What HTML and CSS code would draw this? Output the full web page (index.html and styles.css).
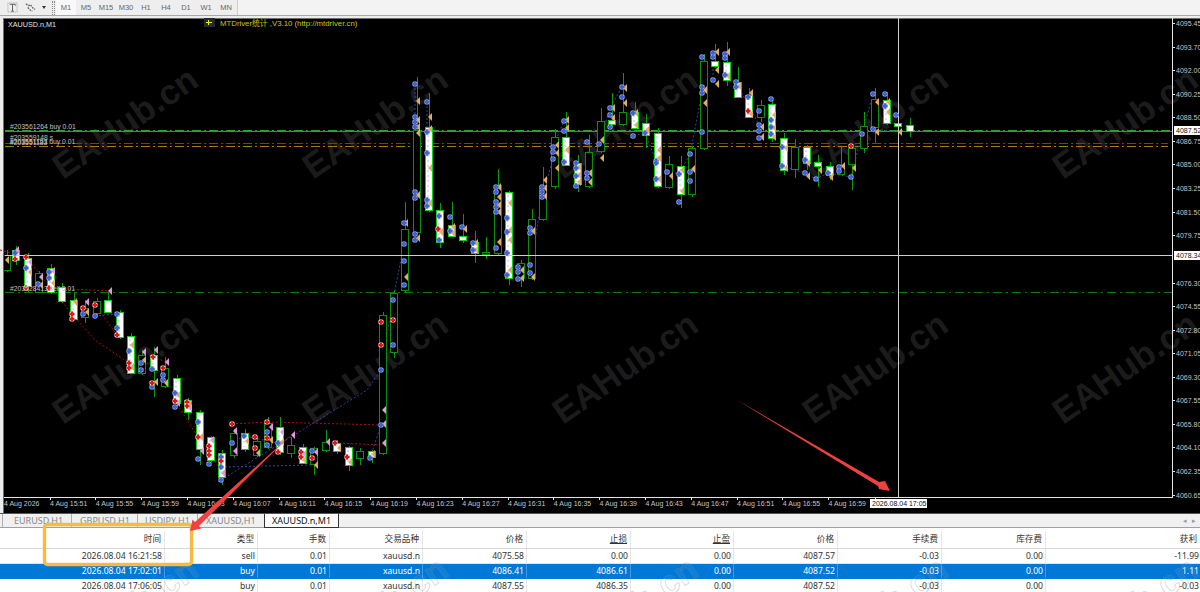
FILE: index.html
```html
<!DOCTYPE html>
<html lang="zh-CN">
<head>
    <meta charset="UTF-8">
    <meta name="viewport" content="width=device-width, initial-scale=1.0">
    <title>XAUUSD.n,M1</title>
    <link rel="stylesheet" href="styles.css">
</head>
<body>
    <div class="page">
        <div class="toolbar">
            <div class="toolbar-group">
                <svg class="tool-icon" viewBox="0 0 12 12">
                    <path d="M1 1v10h10V1z" fill="none" stroke="#999" stroke-dasharray="1 1"/>
                    <path d="M3 2.5h6v1.5M6 2.5V10M4.5 10h3" fill="none" stroke="#555"/>
                </svg>
                <svg class="tool-icon tool-lines" viewBox="0 0 12 12">
                    <path d="M1 2l3 2 2-1 3 4 2 1M3 6l3 3 2 1" fill="none" stroke="#666" stroke-width="1.5" stroke-dasharray="2 1"/>
                </svg>
                <span class="caret"></span>
                <span class="grip"></span>
                <span class="period active">M1</span>
                <span class="period">M5</span>
                <span class="period">M15</span>
                <span class="period">M30</span>
                <span class="period">H1</span>
                <span class="period">H4</span>
                <span class="period">D1</span>
                <span class="period">W1</span>
                <span class="period">MN</span>
            </div>
        </div>

        <div class="chart-frame">
            <svg id="chart" class="chart" viewBox="0 16 1200 497" xmlns="http://www.w3.org/2000/svg"></svg>
        </div>

        <div class="tabs">
            <span class="tab">EURUSD,H1</span>
            <span class="tab">GBPUSD,H1</span>
            <span class="tab">USDJPY,H1</span>
            <span class="tab last">XAUUSD,H1</span>
            <span class="tab active">XAUUSD.n,M1</span>
            <span class="tab-arrows">&#9666;&nbsp;&nbsp;&nbsp;&#9656;</span>
        </div>

        <div class="trades">
            <div class="row head">
                <span>时间</span><span>类型</span><span>手数</span><span>交易品种</span><span>价格</span>
                <span class="ul">止损</span><span class="ul">止盈</span><span>价格</span><span>手续费</span><span>库存费</span><span>获利</span>
            </div>
            <div class="row">
                <span>2026.08.04 16:21:58</span><span>sell</span><span>0.01</span><span>xauusd.n</span><span>4075.58</span>
                <span>0.00</span><span>0.00</span><span>4087.57</span><span>-0.03</span><span>0.00</span><span>-11.99</span>
            </div>
            <div class="row selected">
                <span>2026.08.04 17:02:01</span><span>buy</span><span>0.01</span><span>xauusd.n</span><span>4086.41</span>
                <span>4086.61</span><span>0.00</span><span>4087.52</span><span>-0.03</span><span>0.00</span><span>1.11</span>
            </div>
            <div class="row">
                <span>2026.08.04 17:06:05</span><span>buy</span><span>0.01</span><span>xauusd.n</span><span>4087.55</span>
                <span>4086.35</span><span>0.00</span><span>4087.52</span><span>-0.03</span><span>0.00</span><span>-0.03</span>
            </div>
        </div>

        <!-- annotations drawn on top of the screenshot -->
        <svg class="marks" viewBox="0 0 1200 592" xmlns="http://www.w3.org/2000/svg">
            <g class="wm-outline">
                <text transform="translate(63 670) rotate(-34.7)">EAHub.cn</text>
                <text transform="translate(313 670) rotate(-34.7)">EAHub.cn</text>
                <text transform="translate(563 670) rotate(-34.7)">EAHub.cn</text>
                <text transform="translate(813 670) rotate(-34.7)">EAHub.cn</text>
                <text transform="translate(1063 670) rotate(-34.7)">EAHub.cn</text>
            </g>
            <rect class="note-box" x="44.5" y="524.5" width="147" height="40" rx="3"/>
            <path class="note-arrow" d="M293 433 L199 526 L201.5 528.6 L190 531 L192.5 519.4 L195 522 Z"/>
            <path class="note-arrow" d="M737 400 L879 482 L885 481 L890 491 L879 489 L878 486 Z"/>
        </svg>
    </div>
    <script src="chart.js"></script>
</body>
</html>
```

FILE: styles.css
```css
* {
    box-sizing: border-box;
}
body {
    margin: 0;
    background: #f0f0f0;
    font-family: "Noto Sans", "Noto Sans CJK SC", sans-serif;
    overflow: hidden;
}
.page {
    position: relative;
    width: 1200px;
    height: 592px;
    overflow: hidden;
}

/* top toolbar */
.toolbar {
    height: 16px;
    background: #f3f3f3;
    border-bottom: 1px solid #a8a8a8;
}
.toolbar-group {
    display: flex;
    align-items: center;
    width: 238px;
    height: 15px;
    background: #eeeeee;
    border-right: 1px solid #cfcfcf;
    padding-left: 7px;
}
.tool-icon {
    flex: none;
    width: 11px;
    height: 11px;
}
.tool-lines {
    margin-left: 7px;
}
.caret {
    flex: none;
    width: 0;
    height: 0;
    margin-left: 6px;
    border-left: 2.5px solid transparent;
    border-right: 2.5px solid transparent;
    border-top: 3px solid #333;
}
.grip {
    flex: none;
    width: 3px;
    height: 14px;
    margin-left: 6px;
    margin-right: 1px;
    border-left: 1px dotted #888;
    border-right: 1px dotted #888;
}
.period {
    flex: none;
    width: 20px;
    height: 15px;
    line-height: 15px;
    text-align: center;
    font-family: "Liberation Sans", sans-serif;
    font-size: 7.5px;
    color: #666;
}
.period.active {
    background: #f9f9f9;
}

/* chart */
.chart-frame {
    height: 497px;
    background: #f4f4f4;
}
.chart {
    display: block;
    width: 1200px;
    height: 497px;
    background: #000;
    font-family: "Liberation Sans", sans-serif;
}
.chart-edge {
    fill: #ececec;
}
.chart-edge-line {
    fill: none;
    stroke: #6e6e6e;
    shape-rendering: crispEdges;
}
.watermark {
    font-family: "Liberation Sans", sans-serif;
    font-size: 35px;
    font-weight: bold;
    fill: #1b1b1b;
}
.axis-line {
    stroke: #e4e4e4;
    fill: none;
    shape-rendering: crispEdges;
}
.axis-text {
    font-size: 7px;
    fill: #c4c4c4;
}
.box-text {
    font-size: 7px;
    fill: #111;
}
.box-bg {
    fill: #fff;
}
.order-text {
    font-size: 6.8px;
    fill: #c0c0c0;
}
.title-text {
    font-size: 7.2px;
    fill: #e4e4e4;
}
.mt-text {
    font-family: "Liberation Sans", "Noto Sans CJK SC", sans-serif;
    font-size: 7.8px;
    fill: #c8c800;
}
.plus-box {
    fill: #232a32;
}
.plus {
    stroke: #f0f000;
    shape-rendering: crispEdges;
}
.level {
    fill: none;
    shape-rendering: crispEdges;
}
.level-bid {
    stroke: #6e6e6e;
}
.level-green {
    stroke: #28a428;
    stroke-dasharray: 9 3 2 3;
}
.level-dark {
    stroke: #0d7a0d;
    stroke-dasharray: 9 4 2 4;
}
.level-red {
    stroke: #d01414;
    stroke-dasharray: 9 3 2 3;
}
.level-gold {
    stroke: #a87c0a;
    stroke-dasharray: 9 3 2 3;
}
.cross {
    stroke: #cfcfcf;
    shape-rendering: crispEdges;
}
.wick {
    stroke: #0a9a0a;
    shape-rendering: crispEdges;
}
.body-up {
    fill: #000;
    stroke: #0b8f0b;
    shape-rendering: crispEdges;
}
.body-down {
    fill: #fff;
    stroke: #10d010;
    shape-rendering: crispEdges;
}
.body-dots {
    stroke: #b4c2ee;
    stroke-dasharray: 2 3;
}
.link-blue {
    stroke: #2f46a8;
    stroke-dasharray: 2 2;
    fill: none;
}
.link-red {
    stroke: #a80f0f;
    stroke-dasharray: 2 2;
    fill: none;
}
.halo {
    fill: #8f9cc4;
}
.dot-blue {
    stroke: #3d63d8;
    stroke-width: 2;
}
.dot-red {
    stroke: #f01010;
    stroke-width: 2;
}
.halo-red {
    fill: #d8c6c6;
}
.tri-orange {
    fill: #dfae62;
}
.tri-pink {
    fill: #e596de;
}

/* symbol tabs */
.tabs {
    display: flex;
    align-items: flex-end;
    height: 15px;
    background: #f0f0f0;
    border-top: 1px solid #555;
    border-bottom: 1px solid #a0a0a0;
    padding-left: 2px;
    position: relative;
    font-size: 9px;
}
.tab {
    flex: none;
    width: 66px;
    height: 13px;
    line-height: 13px;
    padding-left: 8px;
    color: #888;
    border-right: 1px solid #b0b0b0;
    white-space: nowrap;
}
.tab:first-child {
    border-left: 1px solid #b0b0b0;
    width: 70px;
    padding-left: 11px;
}
.tab:nth-child(3) {
    width: 60px;
    padding-left: 7px;
}
.tab.last {
    border-right: 0;
}
.tab.active {
    width: 75px;
    height: 14px;
    padding-left: 7px;
    margin-bottom: -1px;
    color: #111;
    background: #fff;
    border: 1px solid #333;
    border-top: 0;
}
.tab-arrows {
    margin-left: auto;
    margin-right: 4px;
    height: 13px;
    line-height: 13px;
    font-size: 7px;
    color: #999;
}

/* trade list */
.trades {
    background: #fff;
    padding-top: 3px;
    font-size: 8.6px;
    color: #333;
}
.row {
    display: grid;
    grid-template-columns: 165px 93px 72px 93px 104px 104px 103px 104px 104px 104px 154px;
    height: 15px;
    line-height: 14px;
    border-bottom: 1px solid #e2e2e2;
}
.row span {
    padding-right: 2px;
    text-align: right;
    border-right: 1px solid #e6e6e6;
    white-space: nowrap;
}
.row span:last-child {
    padding-right: 1px;
    border-right: 0;
}
.row.head {
    height: 18px;
    line-height: 16px;
    border-bottom: 1px solid #d8d8d8;
}
.row.head span {
    padding-right: 3px;
}
.row.selected {
    background: #0078d7;
    color: #fff;
    border-bottom-color: #0078d7;
}
.row.selected span {
    border-right-color: #3f9ae2;
}
.ul {
    text-decoration: underline;
}

/* overlay with the orange box and red arrows */
.marks {
    position: absolute;
    left: 0;
    top: 0;
    width: 1200px;
    height: 592px;
    pointer-events: none;
}
.wm-outline {
    font-family: "Liberation Sans", sans-serif;
    font-size: 35px;
    font-weight: bold;
    fill: rgba(255, 255, 255, 0.08);
    stroke: rgba(130, 130, 130, 0.4);
    stroke-width: 0.7;
}
.note-box {
    fill: none;
    stroke: #fab93f;
    stroke-width: 3.4;
}
.note-arrow {
    fill: #f04040;
}
```

FILE: chart.js
```js
// candles: [x, body top, body bottom, wick top, wick bottom, white body?]
const candles = [
    [7,255,270,250,272,0],[16,250,260,246,265,1],[28,258,286,253,292,1],[39,273,292,271,293,0],
    [51,268,292,264,294,1],[62,287,301,283,303,1],[74,300,319,292,320,1],[85,308,317,300,323,0],
    [97,301,313,298,317,0],[108,300,312,293,313,1],[120,312,337,310,339,1],[131,336,373,333,374,1],
    [142,355,373,350,375,0],[154,355,370,347,397,1],[165,368,386,357,388,0],[177,378,403,375,407,1],
    [188,400,412,398,420,1],[200,412,449,410,465,1],[211,437,460,436,462,1],[222,453,477,450,485,1],
    [234,433,455,429,458,0],[245,433,449,429,452,1],[257,441,455,437,457,0],[268,423,447,417,449,0],
    [280,427,452,417,455,1],[291,445,453,437,458,0],[303,447,463,444,464,1],[314,448,464,447,475,0],
    [326,442,450,430,452,0],[337,443,451,440,454,1],[349,447,465,446,471,1],[360,451,458,448,465,0],
    [372,451,457,450,463,1],[383,315,453,312,455,0],[394,293,352,290,358,0],[405,229,290,202,292,0],
    [417,130,232,77,234,0],[429,127,210,93,212,1],[440,210,242,203,248,1],[452,225,236,202,237,1],
    [463,236,240,214,243,1],[475,242,253,231,263,1],[486,252,254,237,259,0],[498,185,253,169,255,0],
    [509,192,278,191,285,1],[521,263,278,260,287,0],[532,219,278,209,280,0],[543,187,219,167,221,0],
    [555,137,186,129,189,0],[566,137,165,112,166,1],[578,163,184,155,192,1],[589,152,186,135,188,0],
    [601,121,151,108,153,0],[612,120,124,93,127,1],[623,112,124,73,126,0],[635,112,128,102,129,1],
    [646,123,135,114,148,1],[658,133,186,128,188,1],[669,164,187,156,189,0],[681,166,194,156,208,1],
    [692,148,194,146,197,0],[704,61,148,54,150,0],[715,61,66,44,68,1],[727,62,80,42,86,1],
    [738,82,97,67,98,1],[749,95,117,88,118,1],[761,105,117,100,122,0],[772,104,138,97,142,1],
    [784,138,170,133,175,1],[795,147,169,139,178,0],[807,147,163,145,170,1],[818,162,166,155,187,1],
    [830,166,175,162,180,1],[841,165,174,147,175,0],[852,148,164,146,190,0],[864,126,148,112,153,0],
    [875,99,127,88,143,0],[887,100,123,92,125,1],[898,123,126,122,135,1],[910,125,131,118,137,1]
];

const blue = [[15,253],[26,268],[38,284],[49,272],[49,278],[83,314],[95,316],[117,314],[117,328],[129,351],
    [141,363],[141,370],[152,369],[152,387],[163,375],[163,380],[175,393],[175,407],[198,422],[198,459],
    [209,464],[221,457],[221,467],[221,480],[232,443],[244,436],[267,432],[267,445],[278,443],[312,451],
    [370,458],[381,425],[381,370],[393,300],[393,345],[404,223],[404,244],[404,261],[404,285],
    [415,84],[427,102],[415,117],[415,122],[415,127],[427,132],[427,153],[427,200],[427,206],[415,192],[415,198],
    [415,234],[415,240],[439,216],[439,240],[450,217],[450,231],[462,227],[473,243],[473,250],[496,187],[496,192],
    [496,202],[496,207],[496,212],[496,248],[507,218],[507,232],[507,253],[507,275],[518,267],[518,272],[518,279],
    [530,228],[530,233],[530,265],[530,273],[542,187],[542,192],[542,197],[553,147],[553,152],[553,159],[564,121],
    [564,131],[564,162],[576,163],[576,168],[576,176],[576,186],[587,142],[587,173],[587,178],[599,144],[610,108],
    [610,115],[610,127],[622,87],[622,97],[633,113],[633,136],[645,133],[656,161],[656,163],[656,179],[667,172],
    [679,174],[679,202],[690,154],[690,172],[690,181],[702,57],[702,87],[702,93],[702,132],[713,53],[713,57],[713,80],
    [725,54],[725,58],[725,75],[736,82],[736,87],[748,97],[759,111],[759,125],[759,131],[759,138],[771,99],[771,120],
    [771,127],[771,134],[782,147],[782,166],[805,160],[805,173],[816,179],[828,173],[839,167],[839,171],[851,177],
    [862,134],[873,94],[873,129],[885,94],[885,106],[896,115]];

const red = [[15,259],[26,257],[26,288],[49,288],[72,314],[72,319],[83,308],[95,305],[117,335],[129,363],[129,368],
    [153,357],[152,383],[163,368],[175,401],[187,402],[187,406],[198,437],[209,446],[209,451],[209,455],[221,461],
    [232,424],[255,437],[255,448],[267,422],[267,438],[278,452],[301,452],[301,457],[312,458],[335,443],[347,457],
    [381,322],[381,345],[393,320],[438,229],[748,111],[851,146]];

const orange = [[7,260],[30,272],[41,285],[53,283],[75,302],[87,312],[132,345],[132,367],[144,360],[156,382],[166,383],
    [178,395],[189,405],[201,437],[247,441],[258,453],[271,440],[282,442],[304,460],[316,465],[339,448],[350,462],[373,454],
    [406,223],[406,277],[418,101],[418,120],[418,127],[418,133],[418,195],[418,238],[430,117],[430,129],[430,168],[430,203],
    [441,232],[453,227],[453,233],[465,229],[476,243],[476,250],[499,187],[499,197],[499,205],[499,212],[499,242],[510,203],
    [510,230],[510,240],[510,270],[522,270],[522,278],[533,231],[533,277],[545,180],[545,188],[545,196],[557,145],[557,153],
    [557,168],[567,120],[567,128],[567,150],[579,167],[579,175],[579,182],[590,173],[590,182],[602,140],[602,158],[613,108],
    [613,118],[625,88],[625,103],[636,113],[636,125],[647,130],[659,150],[659,158],[659,179],[671,176],[682,170],[682,191],
    [693,169],[705,90],[705,103],[717,52],[717,70],[717,84],[728,52],[728,76],[739,86],[751,93],[751,114],[762,127],[762,137],
    [774,115],[774,128],[774,137],[786,148],[786,168],[808,163],[808,176],[820,170],[831,177],[843,166],[854,168],[877,102],
    [877,132],[888,102],[888,112],[900,132]];

const pink = [[17,250],[30,262],[41,277],[53,271],[87,302],[110,291],[144,352],[156,350],[167,362],[178,403],[190,408],
    [202,451],[212,440],[223,473],[235,431],[235,451],[271,427],[282,432],[293,435],[304,454],[316,452],[328,442],
    [384,410],[384,424],[384,443]];

const blueLinks = ['221,480 367,390 381,370 393,300 404,244','221,467 312,465','232,443 244,436 278,443','95,316 117,314',
    '381,425 370,458','415,84 415,240','427,102 427,206','496,187 496,248','507,218 507,275','530,228 530,273 542,197 553,159',
    '553,147 564,121','576,163 576,186 587,178 599,144 610,108 622,87','633,113 633,136 645,133 656,161 656,179',
    '667,172 679,174 690,154 702,93 702,57','713,53 713,80','725,54 725,75','736,82 759,125','771,99 771,134',
    '782,166 805,173 816,179 828,173 851,177 862,134 873,94','873,129 896,132'];

const redLinks = ['0,250 26,257 72,314 95,340 129,363','49,288 110,291','26,288 49,288','95,305 117,335','153,357 167,362',
    '175,401 198,437 223,473','232,424 267,422 384,425','335,443 384,445','198,437 209,451'];

const axisPrices = [[23,'4095.45'],[47,'4093.70'],[70,'4092.00'],[94,'4090.25'],[117,'4088.50'],[141,'4086.75'],[164,'4085.00'],
    [188,'4083.25'],[212,'4081.50'],[235,'4079.75'],[283,'4076.30'],[306,'4074.55'],[330,'4072.80'],[353,'4071.05'],
    [377,'4069.30'],[400,'4067.55'],[424,'4065.80'],[447,'4064.10'],[471,'4062.35'],[495,'4060.65']];

const axisTimes = ['15:51','15:55','15:59','16:03','16:07','16:11','16:15','16:19','16:23','16:27','16:31','16:35','16:39',
    '16:43','16:47','16:51','16:55','16:59'];

let svg = '';

svg += '<rect class="chart-edge" x="0" y="16" width="3" height="497"/>';
svg += '<rect class="chart-edge" x="0" y="16" width="1200" height="2"/>';
svg += '<path class="chart-edge-line" d="M3.5 513V18.5H1200"/>';

// watermark
for (let row = 0; row < 2; row++) {
    for (let col = 0; col < 5; col++) {
        const tx = 63 + col * 250;
        const ty = 180 + row * 245;
        svg += `<text class="watermark" transform="translate(${tx} ${ty}) rotate(-34.7)">EAHub.cn</text>`;
    }
}

// order levels
svg += '<line class="level level-bid" x1="5" x2="1172" y1="131.5" y2="131.5"/>';
svg += '<line class="level level-green" x1="5" x2="1172" y1="130.5" y2="130.5"/>';
svg += '<line class="level level-red" x1="5" x2="1168" y1="143.5" y2="143.5"/>';
svg += '<line class="level level-gold" x1="5" x2="1168" y1="146.5" y2="146.5"/>';
svg += '<line class="level level-dark" x1="5" x2="1172" y1="292.5" y2="292.5"/>';

for (const line of redLinks) svg += `<polyline class="link-red" points="${line}"/>`;
for (const line of blueLinks) svg += `<polyline class="link-blue" points="${line}"/>`;

// candles
for (const [x, top, bottom, high, low, white] of candles) {
    svg += `<line class="wick" x1="${x + 0.5}" x2="${x + 0.5}" y1="${high}" y2="${low}"/>`;
    svg += `<rect class="${white ? 'body-down' : 'body-up'}" x="${x - 3.5}" y="${top + 0.5}" width="7" height="${bottom - top}"/>`;
    if (white && bottom - top > 14) {
        svg += `<line class="body-dots" x1="${x - 1}" x2="${x - 1}" y1="${top + 3}" y2="${bottom - 2}"/>`;
    }
}

// crosshair goes over the candles
svg += '<line class="cross" x1="898.5" x2="898.5" y1="18" y2="497"/>';
svg += '<line class="cross" x1="5" x2="1172" y1="255.5" y2="255.5"/>';

// trade markers
const dot = (x, y, halo, cls) => `<circle class="${halo}" cx="${x}" cy="${y}" r="2.8"/>` +
    `<path class="${cls}" d="M${x - 2.4} ${y}h4.8M${x} ${y - 2.4}v4.8"/>`;
const tri = (x, y, cls) => `<path class="${cls}" d="M${x - 2} ${y}L${x + 2} ${y - 4}V${y + 4}Z"/>`;

for (const [x, y] of orange) svg += tri(x, y, 'tri-orange');
for (const [x, y] of pink) svg += tri(x, y, 'tri-pink');
for (const [x, y] of blue) svg += dot(x, y, 'halo', 'dot-blue');
for (const [x, y] of red) svg += dot(x, y, 'halo-red', 'dot-red');

// labels
svg += '<text class="title-text" x="8" y="27">XAUUSD.n,M1</text>';
svg += '<rect class="plus-box" x="204" y="18" width="11" height="9"/>';
svg += '<path class="plus" d="M206 22.5h6M208.5 20v5" fill="none"/>';
svg += '<text class="mt-text" x="220" y="26">MTDriver统计 ,V3.10 (http://mtdriver.cn)</text>';
svg += '<text class="order-text" x="10" y="129">#203561264 buy 0.01</text>';
svg += '<text class="order-text" x="10" y="140">#203559148 s</text>';
svg += '<text class="order-text" x="10" y="144">#203551153 buy 0.01</text>';
svg += '<text class="order-text" x="10" y="144.6">#203551183</text>';
svg += '<text class="order-text" x="10" y="291">#203528413 sell 0.01</text>';

// axes
svg += '<path class="axis-line" d="M1172.5 18V497.5H4"/>';
for (const [y, label] of axisPrices) {
    svg += `<line class="axis-line" x1="1172" x2="1175" y1="${y + 0.5}" y2="${y + 0.5}"/>`;
    svg += `<text class="axis-text" x="1176" y="${y + 2.5}">${label}</text>`;
}
svg += '<rect class="box-bg" x="1174" y="126" width="26" height="9"/>';
svg += '<text class="box-text" x="1176" y="133">4087.52</text>';
svg += '<rect class="box-bg" x="1174" y="251" width="26" height="9"/>';
svg += '<text class="box-text" x="1176" y="258">4078.34</text>';

svg += '<text class="axis-text" x="4" y="506">4 Aug 2026</text>';
axisTimes.forEach((time, i) => {
    const x = 50 + i * 45.8;
    svg += `<line class="axis-line" x1="${x}" x2="${x}" y1="497" y2="500"/>`;
    svg += `<text class="axis-text" x="${x}" y="506">4 Aug ${time}</text>`;
});
svg += '<line class="axis-line" x1="875" x2="875" y1="497" y2="500"/>';
svg += '<rect class="box-bg" x="870" y="499" width="57" height="9"/>';
svg += '<text class="box-text" x="872" y="506">2026.08.04 17:05</text>';

document.getElementById('chart').innerHTML = svg;
```
